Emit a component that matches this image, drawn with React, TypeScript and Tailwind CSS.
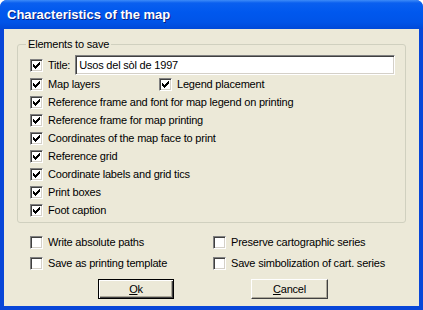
import React from "react";

const font = { fontFamily: '"Liberation Sans", Arial, sans-serif' };

function Check({ on }: { on?: boolean }) {
  return (
    <span className="relative flex h-[13px] w-[13px] shrink-0 items-center justify-center border border-t-[#808080] border-l-[#808080] border-b-white border-r-white bg-white shadow-[inset_1px_1px_0_#404040,inset_-1px_-1px_0_#D4D0C8]">
      {on && (
        <svg width="7" height="7" viewBox="0 0 7 7">
          <path d="M0 2h1v1h1v1h1V3h1V2h1V1h1V0h1v3H6v1H5v1H4v1H3v1H2V6H1V5H0z" fill="#000" />
        </svg>
      )}
    </span>
  );
}

function Row({ label, on = true }: { label: string; on?: boolean }) {
  return (
    <div className="flex h-[18px] items-center gap-[5px]">
      <Check on={on} />
      <span>{label}</span>
    </div>
  );
}

function Button({ children, def }: { children: React.ReactNode; def?: boolean }) {
  return (
    <button
      className={
        def
          ? "flex h-[20px] w-[76px] items-center justify-center border border-black bg-[#ECE9D8] shadow-[inset_1px_1px_0_#fff,inset_-1px_-1px_0_#404040,inset_-2px_-2px_0_#ACA899]"
          : "flex h-[20px] w-[77px] items-center justify-center border border-t-white border-l-white border-b-[#404040] border-r-[#404040] bg-[#ECE9D8] shadow-[inset_-1px_-1px_0_#ACA899]"
      }
    >
      {children}
    </button>
  );
}

export default function App() {
  return (
    <div className="flex h-[310px] w-[423px] flex-col overflow-hidden rounded-t-[7px] bg-[#0846D8] text-[11px] tracking-[-0.2px] text-black" style={font}>
      <div className="flex h-[29px] shrink-0 items-center bg-[linear-gradient(#3D8BF8_0px,#0A5FEF_3px,#0058EE_12px,#0054E8_22px,#0049D8_29px)] pl-[7px] text-[13px] font-bold tracking-normal text-white [text-shadow:1px_1px_0_#0A1E80]">
        Characteristics of the map
      </div>
      <div className="mx-[4px] mb-[4px] flex flex-1 flex-col bg-[#ECE9D8] px-[13px] pt-[15px]">
        <div className="relative h-[179px] rounded-[3px] border border-[#D0D0BF] pl-[12px] pt-[10px]">
          <span className="absolute -top-[8px] left-[8px] bg-[#ECE9D8] px-[2px] leading-[14px]">Elements to save</span>
          <div className="flex h-[20px] items-center">
            <Check on />
            <span className="ml-[5px]">Title:</span>
            <div className="ml-[5px] flex h-[20px] w-[320px] items-center border border-t-[#808080] border-l-[#808080] border-b-white border-r-white bg-white pl-[3px] shadow-[inset_1px_1px_0_#404040,inset_-1px_-1px_0_#D4D0C8]">
              Usos del sòl de 1997
            </div>
          </div>
          <div className="flex">
            <div className="w-[129px]">
              <Row label="Map layers" />
            </div>
            <Row label="Legend placement" />
          </div>
          <Row label="Reference frame and font for map legend on printing" />
          <Row label="Reference frame for map printing" />
          <Row label="Coordinates of the map face to print" />
          <Row label="Reference grid" />
          <Row label="Coordinate labels and grid tics" />
          <Row label="Print boxes" />
          <Row label="Foot caption" />
        </div>
        <div className="mt-[10px] grid grid-cols-[183px_1fr] gap-y-[3px] pl-[13px]">
          <Row label="Write absolute paths" on={false} />
          <Row label="Preserve cartographic series" on={false} />
          <Row label="Save as printing template" on={false} />
          <Row label="Save simbolization of cart. series" on={false} />
        </div>
        <div className="mt-[7px] flex pl-[81px]">
          <Button def>
            <span><u>O</u>k</span>
          </Button>
          <div className="ml-[77px]">
            <Button>
              <span><u>C</u>ancel</span>
            </Button>
          </div>
        </div>
      </div>
    </div>
  );
}
